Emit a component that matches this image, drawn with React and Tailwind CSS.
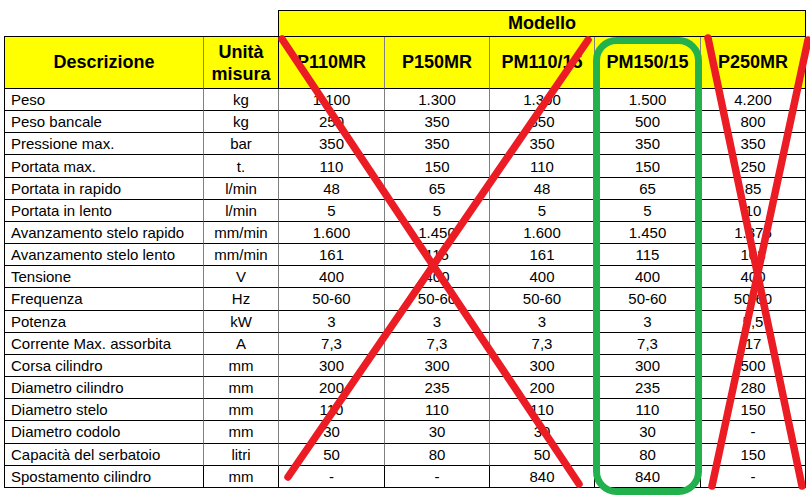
import React from "react";

const rows = [
  ["Peso", "kg", "1.100", "1.300", "1.300", "1.500", "4.200"],
  ["Peso bancale", "kg", "250", "350", "350", "500", "800"],
  ["Pressione max.", "bar", "350", "350", "350", "350", "350"],
  ["Portata max.", "t.", "110", "150", "110", "150", "250"],
  ["Portata in rapido", "l/min", "48", "65", "48", "65", "85"],
  ["Portata in lento", "l/min", "5", "5", "5", "5", "10"],
  ["Avanzamento stelo rapido", "mm/min", "1.600", "1.450", "1.600", "1.450", "1.375"],
  ["Avanzamento stelo lento", "mm/min", "161", "115", "161", "115", "108"],
  ["Tensione", "V", "400", "400", "400", "400", "400"],
  ["Frequenza", "Hz", "50-60", "50-60", "50-60", "50-60", "50-60"],
  ["Potenza", "kW", "3", "3", "3", "3", "5,5"],
  ["Corrente Max. assorbita", "A", "7,3", "7,3", "7,3", "7,3", "17"],
  ["Corsa cilindro", "mm", "300", "300", "300", "300", "500"],
  ["Diametro cilindro", "mm", "200", "235", "200", "235", "280"],
  ["Diametro stelo", "mm", "110", "110", "110", "110", "150"],
  ["Diametro codolo", "mm", "30", "30", "30", "30", "-"],
  ["Capacità del serbatoio", "litri", "50", "80", "50", "80", "150"],
  ["Spostamento cilindro", "mm", "-", "-", "840", "840", "-"],
];

const models = ["P110MR", "P150MR", "PM110/15", "PM150/15", "P250MR"];

export default function App() {
  return (
    <div
      className="relative w-[810px] h-[501px] bg-white overflow-hidden text-black"
      style={{ fontFamily: '"Liberation Sans", Arial, sans-serif' }}
    >
      <div className="pt-[10px] pl-[4px]">
        <div className="grid grid-cols-[200px_75px_106px_105px_105px_106px_105px] grid-rows-[27px_52px_repeat(18,22.17px)]">
          {/* Modello row */}
          <div className="border-b border-black" />
          <div className="border-b border-r border-black" />
          <div className="col-span-5 bg-[#ffff00] border-t border-r border-b border-black flex items-center justify-center text-[18px] font-bold">
            Modello
          </div>

          {/* Header row */}
          <div className="bg-[#ffff00] border-l border-l-black border-b border-b-black border-r border-r-[#808080] flex items-center justify-center text-[18px] font-bold">
            Descrizione
          </div>
          <div className="bg-[#ffff00] border-b border-b-black border-r border-r-black flex flex-col items-center justify-center text-[18px] font-bold leading-[22px] pt-[1px]">
            <span>Unità</span>
            <span>misura</span>
          </div>
          {models.map((m, i) => (
            <div
              key={m}
              className={
                "bg-[#ffff00] border-b border-b-black border-r flex items-center justify-center text-[18px] font-bold " +
                (i === 4 ? "border-r-black" : "border-r-[#808080]")
              }
            >
              {m}
            </div>
          ))}

          {/* Body rows */}
          {rows.map((r, ri) => {
            const last = ri === rows.length - 1;
            const inner = last ? "border-r-black" : "border-r-[#808080]";
            return r.map((v, ci) => {
              let cls =
                "border-b border-b-black border-r flex items-center text-[15px] leading-none whitespace-nowrap ";
              if (ci === 0) cls += "border-l border-l-black pl-[6px] justify-start ";
              else cls += "justify-center ";
              cls += ci === 6 ? "border-r-black" : inner;
              return (
                <div key={ri + "-" + ci} className={cls}>
                  {v}
                </div>
              );
            });
          })}
        </div>
      </div>

      <svg
        className="absolute left-0 top-0 pointer-events-none"
        width="810"
        height="501"
        viewBox="0 0 810 501"
      >
        <g stroke="#ec1c24" strokeWidth="7.5" strokeLinecap="round" fill="none">
          <line x1="282" y1="39" x2="579" y2="484" />
          <line x1="588" y1="40" x2="288" y2="477" />
          <line x1="708" y1="38" x2="802" y2="486" />
          <line x1="808" y1="40" x2="712" y2="486" />
        </g>
        <rect
          x="596.5"
          y="40.5"
          width="102"
          height="451"
          rx="20"
          ry="20"
          fill="none"
          stroke="#22b14c"
          strokeWidth="7"
        />
      </svg>
    </div>
  );
}
